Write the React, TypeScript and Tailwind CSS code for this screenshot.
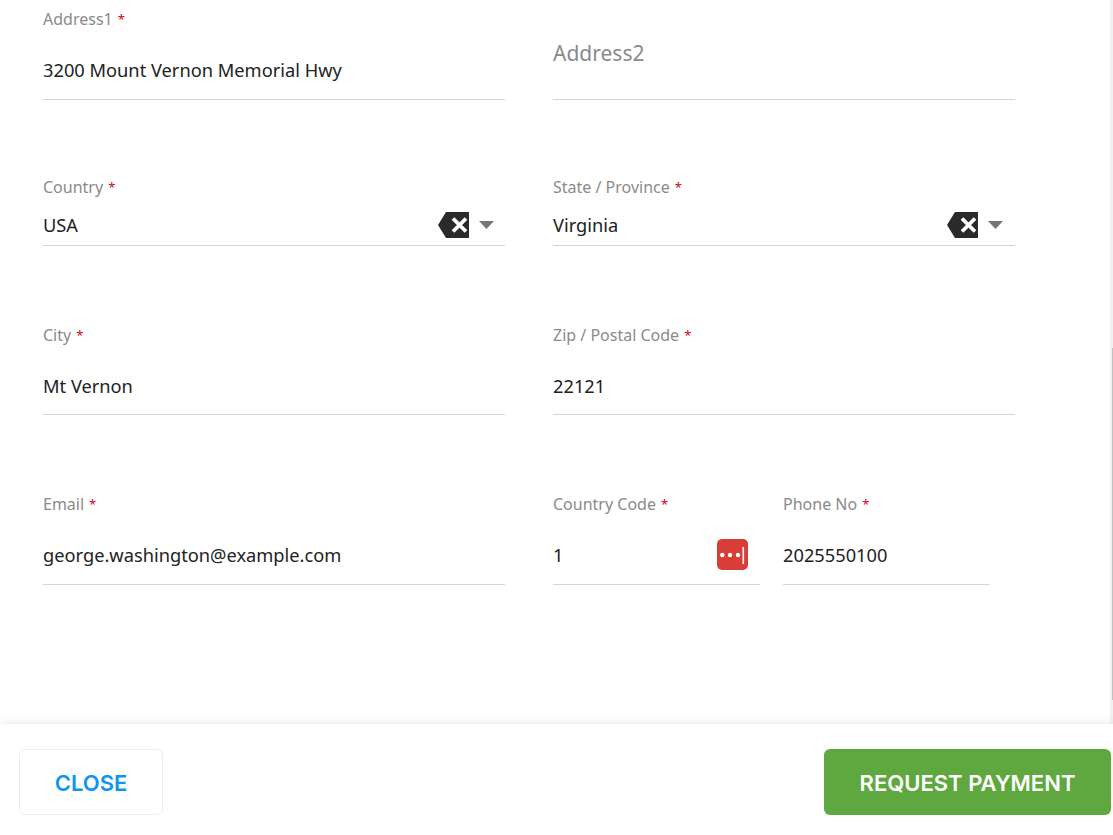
import type { ReactNode } from "react";

const font = "font-['Noto_Sans','Open_Sans',sans-serif]";

const ClearIcon = () => (
  <svg width="31" height="26" viewBox="0 0 31 26" className="shrink-0">
    <path d="M8 0H31V26H8L0 13Z" fill="#2b2a28" />
    <path d="M15 6.5L28 19.5M28 6.5L15 19.5" stroke="#fff" strokeWidth="3.8" />
  </svg>
);

const Caret = () => (
  <svg width="15" height="8" viewBox="0 0 15 8" className="shrink-0">
    <path d="M0 0H15L7.5 8Z" fill="#757575" />
  </svg>
);

const PassIcon = () => (
  <svg width="31" height="31" viewBox="0 0 31 31" className="shrink-0">
    <rect width="31" height="31" rx="5" fill="#d83d38" />
    <circle cx="5.3" cy="16" r="2.2" fill="#fff" />
    <circle cx="13" cy="16" r="2.2" fill="#fff" />
    <circle cx="21" cy="16" r="2.2" fill="#fff" />
    <rect x="25.5" y="8" width="1.6" height="17" fill="#fff" />
  </svg>
);

const Field = ({
  label,
  required = true,
  value,
  boxClass,
  valueClass,
  children,
  className = "",
}: {
  label: string;
  required?: boolean;
  value?: string;
  boxClass: string;
  valueClass: string;
  children?: ReactNode;
  className?: string;
}) => (
  <div className={`flex flex-col border-b border-[#d6d6d6] ${boxClass} ${className}`}>
    <div className="h-[20px] text-[16px] leading-[20px] text-[#8a8a8a] whitespace-nowrap">
      {label}
      {required && <span className="relative -top-[1px] ml-[5px] text-[13px] text-[#d0021b]">*</span>}
    </div>
    <div className={`flex flex-1 items-center justify-between text-[18.25px] leading-[26px] text-[#222] ${valueClass}`}>
      <span className="whitespace-nowrap">{value}</span>
      {children}
    </div>
  </div>
);

const App = () => (
  <div className={`flex h-[835px] w-[1113px] flex-col overflow-hidden bg-white ${font}`}>
    <div className="relative h-[724px] shrink-0 pl-[43px] pr-[98px] pt-[9px]">
      <div className="absolute inset-y-0 right-0 w-[3px] bg-[#f1f1f1]">
        <div className="absolute right-0 top-[348px] h-[352px] w-[1.5px] bg-[#c1c1c1]" />
      </div>

      <div className="grid grid-cols-2 gap-x-[48px]">
        <Field label="Address1" value="3200 Mount Vernon Memorial Hwy" boxClass="h-[91px]" valueClass="pt-[12px]" />
        <div className="flex h-[91px] items-start border-b border-[#d6d6d6] pt-[30px] text-[21px] leading-[28px] text-[#8a8a8a]">
          Address2
        </div>
      </div>

      <div className="mt-[77px] grid grid-cols-2 gap-x-[48px]">
        <Field label="Country" value="USA" boxClass="h-[69px]" valueClass="pt-[8px]">
          <span className="flex items-center gap-[10px] pr-[11px]">
            <ClearIcon />
            <Caret />
          </span>
        </Field>
        <Field label="State / Province" value="Virginia" boxClass="h-[69px]" valueClass="pt-[8px]">
          <span className="flex items-center gap-[10px] pr-[12px]">
            <ClearIcon />
            <Caret />
          </span>
        </Field>
      </div>

      <div className="mt-[79px] grid grid-cols-2 gap-x-[48px]">
        <Field label="City" value="Mt Vernon" boxClass="h-[90px]" valueClass="pt-[13px]" />
        <Field label="Zip / Postal Code" value="22121" boxClass="h-[90px]" valueClass="pt-[13px]" />
      </div>

      <div className="mt-[79px] grid grid-cols-2 gap-x-[48px]">
        <Field label="Email" value="george.washington@example.com" boxClass="h-[91px]" valueClass="pt-[12px]" />
        <div className="flex gap-[23px]">
          <Field label="Country Code" value="1" boxClass="h-[91px]" valueClass="pt-[12px]" className="w-[207px]">
            <span className="mb-[2px] pr-[12px]">
              <PassIcon />
            </span>
          </Field>
          <Field label="Phone No" value="2025550100" boxClass="h-[91px]" valueClass="pt-[12px]" className="w-[207px]" />
        </div>
      </div>
    </div>

    <div className="relative flex flex-1 items-start justify-between bg-white pl-[19px] pr-[2px] pt-[25px] shadow-[0_-2px_8px_rgba(0,0,0,0.08)]">
      <button className="flex h-[66px] w-[144px] items-center justify-center rounded-[6px] border border-[#e6eefb] bg-white pt-[2px] font-['Inter',sans-serif] text-[22px] font-semibold text-[#0f95ee]">
        CLOSE
      </button>
      <button className="flex h-[66px] w-[287px] items-center justify-center rounded-[6px] bg-[#5ea83f] pt-[2px] font-['Inter',sans-serif] text-[22px] font-semibold text-white">
        REQUEST PAYMENT
      </button>
    </div>
  </div>
);

export default App;
